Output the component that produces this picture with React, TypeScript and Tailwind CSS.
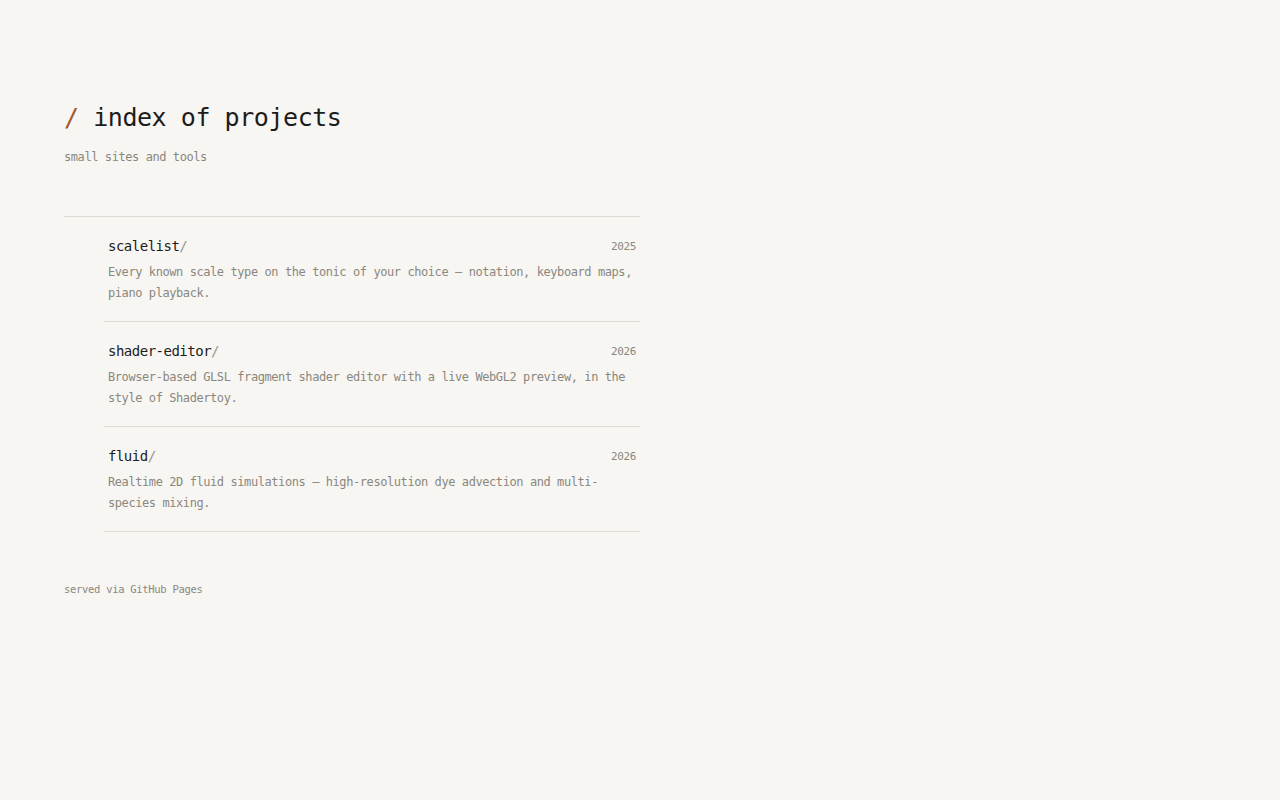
const projects = [
  {
    name: 'scalelist',
    year: '2025',
    desc: 'Every known scale type on the tonic of your choice — notation, keyboard maps, piano playback.',
  },
  {
    name: 'shader-editor',
    year: '2026',
    desc: 'Browser-based GLSL fragment shader editor with a live WebGL2 preview, in the style of Shadertoy.',
  },
  {
    name: 'fluid',
    year: '2026',
    desc: 'Realtime 2D fluid simulations — high-resolution dye advection and multi-species mixing.',
  },
];

export default function App() {
  return (
    <div className="min-h-screen bg-[#f7f6f2] font-['DejaVu_Sans_Mono',monospace]">
      <main className="w-[576px] ml-16 pt-[100px]">
        <h1 className="text-[25px] leading-[36px] tracking-[-0.45px] text-[#1c1c1c]">
          <span className="text-[#a4582c]">/</span> index of projects
        </h1>
        <p className="mt-[11px] text-[12px] leading-5 tracking-[-0.42px] text-[#8b877f]">small sites and tools</p>

        <ul className="mt-[49px] border-t border-[#dcdad4] pl-10">
          {projects.map((p) => (
            <li key={p.name} className="border-b border-[#dcdad4] px-1 pt-[17px] pb-[17px]">
              <div className="flex h-6 items-center justify-between">
                <a className="text-[14px] leading-6 tracking-[-0.5px] text-[#1c1c1c]">
                  {p.name}
                  <span className="text-[#9a968f]">/</span>
                </a>
                <span className="pt-px text-[11px] leading-6 tracking-[-0.4px] text-[#8b877f]">{p.year}</span>
              </div>
              <p className="mt-[4px] text-[12px] leading-[21px] tracking-[-0.42px] text-[#8b877f]">{p.desc}</p>
            </li>
          ))}
        </ul>

        <footer className="mt-[49px] text-[10.5px] leading-4 tracking-[-0.3px] text-[#8b877f]">served via GitHub Pages</footer>
      </main>
    </div>
  );
}
